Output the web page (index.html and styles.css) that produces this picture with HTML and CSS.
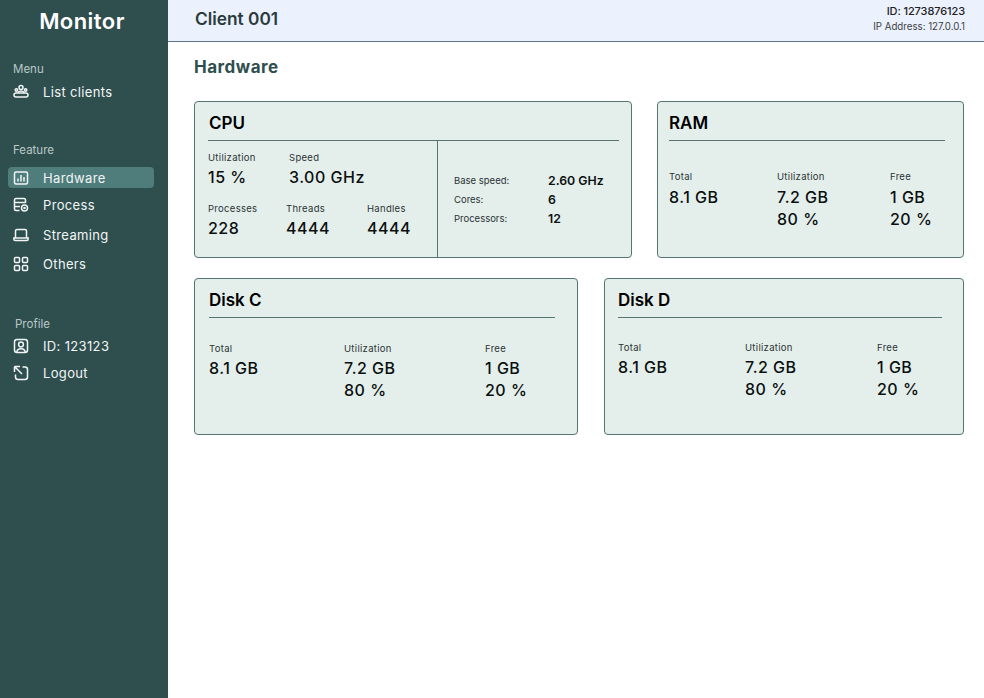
FILE: index.html
```html
<!DOCTYPE html>
<html lang="en">
<head>
	<meta charset="UTF-8">
	<title>Monitor</title>
	<link rel="stylesheet" href="styles.css">
</head>
<body>
	<div class="app">
		<div class="sidebar">
			<div class="logo">Monitor</div>
			<div class="nav_title title_menu">Menu</div>
			<a class="nav_item item_clients">
				<svg class="nav_icon" viewBox="0 0 16 16"><circle cx="8" cy="3.6" r="2"/><circle cx="3.4" cy="6" r="1.2"/><circle cx="12.6" cy="6" r="1.2"/><path d="M4.8 9c.4-1.3 1.6-2 3.2-2s2.800.7 3.2 2"/><rect x="1" y="9" width="14" height="4" rx="2"/></svg>
				List clients
			</a>
			<div class="nav_title title_feature">Feature</div>
			<a class="nav_item active">
				<svg class="nav_icon" viewBox="0 0 16 16"><rect x="1.5" y="2" width="13" height="12" rx="1.5"/><path d="M5 11.5V8.5M8 11.5V5M11 11.5V7"/></svg>
				Hardware
			</a>
			<a class="nav_item item_process">
				<svg class="nav_icon" viewBox="0 0 16 16"><path d="M6.5 13.5H3c-1 0-1.5-.6-1.5-1.5V3c0-1 .5-1.5 1.5-1.5h8c1 0 1.5.5 1.5 1.5v3M1.5 5.5h11M1.5 9.5H7"/><circle cx="11.5" cy="11" r="3"/><circle cx="11.5" cy="11" r=".6"/></svg>
				Process
			</a>
			<a class="nav_item item_streaming">
				<svg class="nav_icon" viewBox="0 0 16 16"><path d="M2.5 11V4c0-.9.5-1.5 1.500-1.500h8c1 0 1.500.6 1.500 1.500v7M.8 11h14.400v1c0 .8-.6 1.500-1.500 1.500H2.300c-.9 0-1.500-.7-1.500-1.500z"/></svg>
				Streaming
			</a>
			<a class="nav_item item_others">
				<svg class="nav_icon" viewBox="0 0 16 16"><rect x="1.5" y="1.5" width="5" height="5" rx="1"/><rect x="9.5" y="1.5" width="5" height="5" rx="1"/><rect x="1.5" y="9.5" width="5" height="5" rx="1"/><rect x="9.5" y="9.5" width="5" height="5" rx="1"/></svg>
				Others
			</a>
			<div class="nav_title title_profile">Profile</div>
			<a class="nav_item item_profile">
				<svg class="nav_icon" viewBox="0 0 16 16"><rect x="1.5" y="1.5" width="13" height="13" rx="2.5"/><circle cx="8" cy="6.5" r="2.4"/><path d="M3.8 14.5c0-2.5 1.800-3.800 4.200-3.800s4.200 1.300 4.200 3.800"/></svg>
				ID: 123123
			</a>
			<a class="nav_item item_logout">
				<svg class="nav_icon" viewBox="0 0 16 16"><path d="M1.5 1.5H7M1.5 1.5V7M2 2l7 7M9.5 2H12c1.500 0 2.500 1 2.500 2.500V12c0 1.500-1 2.500-2.500 2.500H5c-1.500 0-2.500-1-2.500-2.500V9.500"/></svg>
				Logout
			</a>
		</div>
		<div class="main">
			<div class="header">
				<div class="client_name">Client 001</div>
				<div class="client_info">
					<div class="client_id">ID: 1273876123</div>
					<div class="client_ip">IP Address: 127.0.0.1</div>
				</div>
			</div>
			<div class="content">
				<h2 class="page_title">Hardware</h2>
				<div class="row row_top">
					<div class="card card_cpu">
						<div class="card_title">CPU</div>
						<div class="cpu_body">
							<div class="cpu_left">
								<div class="cpu_line line_first">
									<div class="stat stat_util"><div class="label">Utilization</div><div class="value">15 %</div></div>
									<div class="stat"><div class="label">Speed</div><div class="value">3.00 GHz</div></div>
								</div>
								<div class="cpu_line">
									<div class="stat stat_proc"><div class="label">Processes</div><div class="value">228</div></div>
									<div class="stat stat_thread"><div class="label">Threads</div><div class="value">4444</div></div>
									<div class="stat"><div class="label">Handles</div><div class="value">4444</div></div>
								</div>
							</div>
							<div class="cpu_right">
								<div class="spec"><span class="spec_label">Base speed:</span><span class="spec_value">2.60 GHz</span></div>
								<div class="spec"><span class="spec_label">Cores:</span><span class="spec_value">6</span></div>
								<div class="spec"><span class="spec_label">Processors:</span><span class="spec_value">12</span></div>
							</div>
						</div>
					</div>
					<div class="card card_ram">
						<div class="card_title">RAM</div>
						<div class="usage usage_ram">
							<div class="stat"><div class="label">Total</div><div class="value">8.1 GB</div></div>
							<div class="stat"><div class="label">Utilization</div><div class="value">7.2 GB</div><div class="value">80 %</div></div>
							<div class="stat"><div class="label">Free</div><div class="value">1 GB</div><div class="value">20 %</div></div>
						</div>
					</div>
				</div>
				<div class="row">
					<div class="card card_c">
						<div class="card_title">Disk C</div>
						<div class="usage usage_c">
							<div class="stat"><div class="label">Total</div><div class="value">8.1 GB</div></div>
							<div class="stat"><div class="label">Utilization</div><div class="value">7.2 GB</div><div class="value">80 %</div></div>
							<div class="stat"><div class="label">Free</div><div class="value">1 GB</div><div class="value">20 %</div></div>
						</div>
					</div>
					<div class="card card_d">
						<div class="card_title">Disk D</div>
						<div class="usage usage_d">
							<div class="stat"><div class="label">Total</div><div class="value">8.1 GB</div></div>
							<div class="stat"><div class="label">Utilization</div><div class="value">7.2 GB</div><div class="value">80 %</div></div>
							<div class="stat"><div class="label">Free</div><div class="value">1 GB</div><div class="value">20 %</div></div>
						</div>
					</div>
				</div>
			</div>
		</div>
	</div>
</body>
</html>
```
FILE: styles.css
```css
*{
	margin: 0;
	padding: 0;
	box-sizing: border-box;
}
html,body{
	height: 100%;
	overflow: hidden;
}
body{
	font-family: "Inter", "Liberation Sans", sans-serif;
	color: #000;
	background: #fff;
}
.app{
	display: flex;
	height: 698px;
}
.sidebar{
	width: 168px;
	flex: none;
	background: #2f4f4f;
	color: #fff;
	padding: 0 14px 0 8px;
}
.logo{
	height: 41px;
	padding-top: 8px;
	text-align: center;
	font-size: 22px;
	line-height: 26px;
	font-weight: 600;
	letter-spacing: .45px;
	margin-right: -2px;
}
.nav_title{
	font-size: 11.5px;
	line-height: 14px;
	color: #b9c8c6;
	padding-left: 5px;
}
.title_menu{
	margin-top: 21px;
}
.title_feature{
	margin-top: 41px;
}
.title_profile{
	margin-top: 43px;
	padding-left: 7px;
}
.nav_item{
	display: flex;
	align-items: center;
	height: 21px;
	margin-top: 7px;
	padding-left: 5px;
	border-radius: 4px;
	font-size: 13px;
	letter-spacing: .35px;
	color: #f2f5f5;
}
.nav_item.active{
	background: #4f7d7b;
	margin-top: 10px;
}
.item_clients{
	margin-top: 5px;
}
.item_process{
	margin-top: 6px;
}
.item_streaming{
	margin-top: 9px;
}
.item_others{
	margin-top: 8px;
}
.item_profile{
	margin-top: 4px;
}
.item_logout{
	margin-top: 6px;
}
.nav_icon{
	width: 16px;
	height: 16px;
	margin-right: 14px;
	flex: none;
	fill: none;
	stroke: #f2f5f5;
	stroke-width: 1.5;
}
.main{
	flex: 1;
	min-width: 0;
}
.header{
	height: 42px;
	background: #ebf1fd;
	border-bottom: 1px solid #5f7486;
	display: flex;
	justify-content: space-between;
	padding: 3px 19px 0 27px;
}
.client_name{
	font-size: 17.3px;
	line-height: 32px;
	font-weight: 600;
	color: #2a3b3b;
}
.client_info{
	text-align: right;
}
.client_id{
	font-size: 11px;
	line-height: 16px;
	font-weight: 500;
	color: #222;
	letter-spacing: -.1px;
}
.client_ip{
	font-size: 9.7px;
	line-height: 16px;
	color: #3c3f42;
}
.content{
	padding: 14px 20px 0 26px;
}
.page_title{
	font-size: 17px;
	line-height: 22px;
	font-weight: 700;
	letter-spacing: .5px;
	color: #2f4f4f;
}
.row{
	display: flex;
	justify-content: space-between;
	margin-top: 20px;
}
.row_top{
	margin-top: 23px;
}
.card{
	height: 157px;
	background: #e4efec;
	border: 1px solid #557472;
	border-radius: 4px;
}
.card_cpu{
	width: 438px;
}
.card_ram{
	width: 307px;
}
.card_c{
	width: 384px;
}
.card_d{
	width: 360px;
}
.card_title{
	height: 39px;
	margin: 0 12px 0 13px;
	border-bottom: 1px solid #557472;
	font-size: 17px;
	line-height: 43px;
	font-weight: 600;
}
.card_ram .card_title{
	margin: 0 18px 0 11px;
}
.card_c .card_title{
	margin: 0 22px 0 14px;
}
.card_d .card_title{
	margin: 0 21px 0 13px;
}
.card_cpu .card_title{
	padding-left: 1px;
}
.cpu_body{
	display: flex;
	height: 116px;
}
.cpu_left{
	width: 243px;
	border-right: 1px solid #557472;
	padding: 11px 0 0 13px;
}
.cpu_line{
	display: flex;
}
.line_first{
	height: 51px;
}
.stat_util{
	width: 81px;
}
.stat_proc{
	width: 78px;
}
.stat_thread{
	width: 81px;
}
.label{
	font-size: 9.5px;
	line-height: 12px;
	letter-spacing: .3px;
	color: #2b3434;
}
.value{
	font-size: 16px;
	line-height: 22px;
	font-weight: 550;
	letter-spacing: .5px;
	margin-top: 2px;
	color: #0b0f0f;
}
.value + .value{
	margin-top: 0;
}
.usage_ram .label{
	margin-bottom: 3px;
}
.cpu_right{
	flex: 1;
	padding: 30px 0 0 16px;
}
.spec{
	display: flex;
	align-items: center;
	height: 19px;
}
.spec_label{
	width: 94px;
	font-size: 9.5px;
	color: #2b3434;
}
.spec_value{
	font-size: 12.3px;
	font-weight: 600;
	color: #0b0f0f;
}
.usage{
	display: flex;
	padding: 30px 0 0 11px;
}
.usage_c{
	padding: 25px 0 0 14px;
}
.usage_d{
	padding: 24px 0 0 13px;
}
.usage_ram .stat:nth-child(1){
	width: 108px;
}
.usage_ram .stat:nth-child(2){
	width: 113px;
}
.usage_c .stat:nth-child(1){
	width: 135px;
}
.usage_c .stat:nth-child(2){
	width: 141px;
}
.usage_d .stat:nth-child(1){
	width: 127px;
}
.usage_d .stat:nth-child(2){
	width: 132px;
}
```
